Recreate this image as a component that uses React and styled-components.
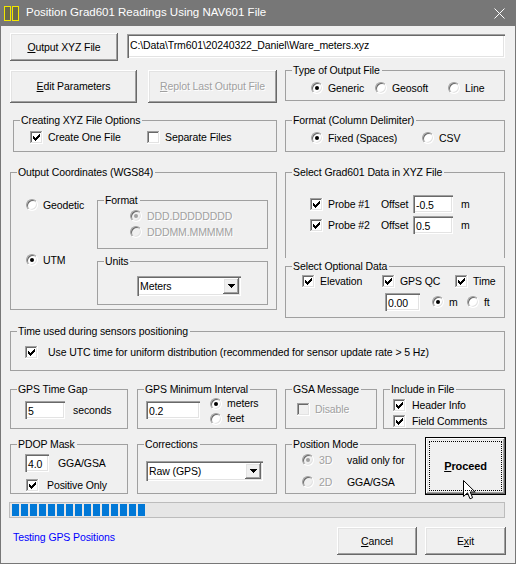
import React from 'react';
import styled, { createGlobalStyle } from 'styled-components';

const GlobalStyle = createGlobalStyle`
  html, body {
    margin: 0;
    padding: 0;
    background: #ffffff;
  }
`;

// classic 3D edges
const raised = `
  box-shadow: inset -1px -1px 0 #696969, inset 1px 1px 0 #ffffff,
    inset -2px -2px 0 #a0a0a0, inset 2px 2px 0 #e3e3e3;
`;
const sunken = `
  box-shadow: inset 1px 1px 0 #a0a0a0, inset 2px 2px 0 #696969,
    inset -1px -1px 0 #ffffff, inset -2px -2px 0 #e3e3e3;
`;

const Window = styled.div`
  width: 516px;
  height: 564px;
  box-sizing: border-box;
  display: flex;
  flex-direction: column;
  background: #f0f0f0;
  border: 1px solid #777777;
  border-top: none;
  font-family: 'Liberation Sans', Arial, sans-serif;
  font-size: 10.5px;
  letter-spacing: -0.1px;
  line-height: 13px;
  color: #000;
  overflow: hidden;
`;

const TitleBar = styled.div`
  height: 26px;
  flex: none;
  display: flex;
  align-items: center;
  padding-left: 3px;
  background: #777777;
  color: #ffffff;
  font-size: 11.5px;
  letter-spacing: 0;
`;

const TitleText = styled.span`
  margin-left: 6px;
  margin-top: -1px;
`;

const CloseGlyph = styled.svg`
  margin-left: auto;
  margin-right: 10px;
`;

const Client = styled.div`
  display: flex;
  flex-direction: column;
  padding: 7px 10px 0 9px;
`;

const TopRow = styled.div`
  display: flex;
  align-items: flex-start;
  gap: 9px;
  height: 28px;
`;

const PushButton = styled.button`
  position: relative;
  flex: none;
  width: ${p => p.$w}px;
  height: ${p => p.$h}px;
  margin: 0;
  padding: 0;
  border: none;
  background: #f0f0f0;
  font: inherit;
  letter-spacing: inherit;
  color: #000;
  ${raised}

  &:disabled {
    color: #a0a0a0;
    text-shadow: 1px 1px 0 #ffffff;
  }
`;

const DefaultButton = styled(PushButton)`
  border: 1px solid #000;
  font-weight: bold;
  font-size: 11px;

  &::after {
    content: '';
    position: absolute;
    inset: 3px;
    border: 1px dotted #000;
  }
`;

const Field = styled.div`
  flex: none;
  box-sizing: border-box;
  width: ${p => p.$w}px;
  height: ${p => p.$h || 18}px;
  margin-top: ${p => p.$top || 0}px;
  padding: ${p => p.$pt ?? 4}px 0 0 3px;
  background: #ffffff;
  white-space: nowrap;
  overflow: hidden;
  ${sunken}
`;

const Columns = styled.div`
  display: grid;
  grid-template-columns: 267px 220px;
  column-gap: 8px;
  align-items: start;
  margin-top: 3px;
`;

const Column = styled.div`
  display: flex;
  flex-direction: column;
`;

const ButtonPair = styled.div`
  display: flex;
  gap: 11px;
  margin-top: 6px;
`;

const Group = styled.fieldset`
  box-sizing: border-box;
  flex: none;
  width: ${p => p.$w}px;
  height: ${p => p.$h}px;
  min-width: 0;
  margin: ${p => p.$mt || 0}px 0 0 ${p => p.$ml || 0}px;
  padding: 0;
  border: 1px solid #a0a0a0;
  border-bottom-style: ${p => (p.$open ? 'none' : 'solid')};
`;

const Legend = styled.legend`
  margin-left: 6px;
  padding: 0 2px 0 1px;
  height: 13px;
  line-height: 13px;
`;

const OptionRow = styled.div`
  display: flex;
  align-items: center;
  gap: ${p => p.$gap || 0}px;
  height: ${p => p.$h || 14}px;
  padding-left: ${p => p.$indent || 0}px;
  margin-top: ${p => p.$top || 0}px;
`;

const Stack = styled.div`
  display: flex;
  flex-direction: column;
  padding: ${p => p.$pt || 0}px 0 0 ${p => p.$pl || 0}px;
  margin-left: ${p => p.$ml || 0}px;
  gap: ${p => p.$gap || 0}px;
`;

const Inline = styled.div`
  display: flex;
  align-items: flex-start;
  padding-left: ${p => p.$pl || 0}px;
`;

const CoordGrid = styled.div`
  display: grid;
  grid-template-columns: 71px 171px;
  row-gap: 6px;
  margin-top: 15px;
  padding-left: 15px;
`;

const CoordCell = styled.div`
  padding-top: ${p => p.$pt || 0}px;
  margin-top: ${p => p.$mt || 0}px;
`;

const Text = styled.span`
  flex: none;
  white-space: nowrap;
  width: ${p => (p.$w ? `${p.$w}px` : 'auto')};
  margin-left: ${p => p.$ml || 0}px;
`;

const ChoiceLabel = styled.label`
  display: inline-flex;
  align-items: center;
  flex: none;
  gap: ${p => p.$gap ?? 5}px;
  width: ${p => (p.$w ? `${p.$w}px` : 'auto')};
  white-space: nowrap;
  color: ${p => (p.$disabled ? '#a0a0a0' : 'inherit')};
  text-shadow: ${p => (p.$disabled ? '1px 1px 0 #ffffff' : 'none')};
`;

const RadioMark = styled.span`
  flex: none;
  display: grid;
  place-items: center;
  width: 12px;
  height: 12px;
  box-sizing: border-box;
  border-radius: 50%;
  border: 1px solid;
  border-color: #a0a0a0 #ffffff #ffffff #a0a0a0;
  background: ${p => (p.$disabled ? '#f0f0f0' : '#ffffff')};
  box-shadow: inset 1px 1px 0 #696969, inset -1px -1px 0 #e3e3e3;

  &::after {
    content: '';
    display: ${p => (p.$checked ? 'block' : 'none')};
    width: 4px;
    height: 4px;
    border-radius: 50%;
    background: ${p => (p.$disabled ? '#a0a0a0' : '#000')};
  }
`;

const Radio = ({ label, checked, disabled, w, gap }) => (
  <ChoiceLabel $w={w} $gap={gap} $disabled={disabled}>
    <RadioMark $checked={checked} $disabled={disabled} />
    {label}
  </ChoiceLabel>
);

const TICK = [
  [9, 3, 1], [8, 4, 2], [3, 5, 1], [7, 5, 3], [3, 6, 2],
  [6, 6, 3], [3, 7, 5], [4, 8, 3], [5, 9, 1],
];

const CheckMark = ({ checked, disabled }) => (
  <svg width="13" height="13" viewBox="0 0 13 13" shapeRendering="crispEdges" style={{ flex: 'none' }}>
    <rect x="0" y="0" width="13" height="13" fill="#ffffff" />
    <rect x="0" y="0" width="12" height="12" fill="#a0a0a0" />
    <rect x="1" y="1" width="11" height="11" fill="#e3e3e3" />
    <rect x="1" y="1" width="10" height="10" fill="#696969" />
    <rect x="2" y="2" width="9" height="9" fill={disabled ? '#f0f0f0' : '#ffffff'} />
    {checked && TICK.map(([x, y, w]) => (
      <rect key={`${x}-${y}`} x={x} y={y} width={w} height="1" fill="#000" />
    ))}
  </svg>
);

const Check = ({ label, checked, disabled, w, gap }) => (
  <ChoiceLabel $w={w} $gap={gap} $disabled={disabled}>
    <CheckMark checked={checked} disabled={disabled} />
    {label}
  </ChoiceLabel>
);

const ComboBox = styled.div`
  flex: none;
  box-sizing: border-box;
  display: flex;
  align-items: center;
  width: ${p => p.$w}px;
  height: 20px;
  margin-top: ${p => p.$top || 0}px;
  padding: 2px;
  background: #ffffff;
  ${sunken}
`;

const ComboText = styled.span`
  flex: 1;
  padding-left: 1px;
  padding-top: 1px;
  white-space: nowrap;
`;

const ComboButton = styled.span`
  flex: none;
  display: grid;
  place-items: center;
  width: 16px;
  height: 16px;
  background: #f0f0f0;
  ${raised}
`;

const Combo = ({ value, w, top }) => (
  <ComboBox $w={w} $top={top}>
    <ComboText>{value}</ComboText>
    <ComboButton>
      <svg width="7" height="4" viewBox="0 0 7 4" shapeRendering="crispEdges">
        <path d="M0 0H7L3.5 4Z" fill="#000" />
      </svg>
    </ComboButton>
  </ComboBox>
);

const Section = styled(Group)``;

const BottomRow = styled.div`
  display: flex;
  align-items: flex-start;
  margin-top: ${p => p.$top}px;
  height: ${p => p.$h}px;
`;

const Progress = styled.div`
  box-sizing: border-box;
  display: flex;
  gap: 2px;
  width: 496px;
  height: 16px;
  margin: 7px 0 0 -1px;
  padding: 1px 2px;
  border: 1px solid #bcbcbc;
  background: #e6e6e6;
`;

const ProgressBlock = styled.span`
  width: 7px;
  height: 12px;
  background: #0078d7;
`;

const Footer = styled.div`
  display: flex;
  align-items: flex-start;
  margin-top: 9px;
`;

const StatusText = styled.span`
  margin: 4px 0 0 3px;
  color: #0000ff;
`;

const FooterButtons = styled.div`
  display: flex;
  gap: 8px;
  margin-left: auto;
  margin-right: -1px;
`;

const Pointer = styled.svg`
  position: absolute;
  left: 37px;
  top: 42px;
  pointer-events: none;
`;

const outputPath = String.raw`C:\Data\Trm601\20240322_Daniel\Ware_meters.xyz`;

export default function App() {
  return (
    <>
      <GlobalStyle />
      <Window>
        <TitleBar>
          <svg width="16" height="16" viewBox="0 0 16 16" shapeRendering="crispEdges" style={{ marginTop: 2 }}>
            <rect x="0.5" y="0.5" width="6" height="14" fill="#6a6a4a" stroke="#f2e600" />
            <rect x="8.5" y="0.5" width="6" height="14" fill="#6a6a4a" stroke="#f2e600" />
          </svg>
          <TitleText>Position Grad601 Readings Using NAV601 File</TitleText>
          <CloseGlyph width="11" height="11" viewBox="0 0 11 11">
            <path d="M0.5 0.5L10.5 10.5M10.5 0.5L0.5 10.5" stroke="#ffffff" strokeWidth="1" />
          </CloseGlyph>
        </TitleBar>

        <Client>
          <TopRow>
            <PushButton $w={108} $h={28}><u>O</u>utput XYZ File</PushButton>
            <Field $w={378} $h={24} $top={1} $pt={5}>{outputPath}</Field>
          </TopRow>

          <Columns>
            <Column>
              <ButtonPair>
                <PushButton $w={127} $h={33}><u>E</u>dit Parameters</PushButton>
                <PushButton $w={129} $h={33} disabled><u>R</u>eplot Last Output File</PushButton>
              </ButtonPair>

              <Group $w={264} $h={38} $mt={11} $ml={3}>
                <Legend>Creating XYZ File Options</Legend>
                <OptionRow $indent={16} $top={3}>
                  <Check checked label="Create One File" w={117} />
                  <Check label="Separate Files" />
                </OptionRow>
              </Group>

              <Group $w={267} $h={144} $mt={14}>
                <Legend>Output Coordinates (WGS84)</Legend>
                <CoordGrid>
                  <CoordCell $pt={4}>
                    <OptionRow><Radio label="Geodetic" /></OptionRow>
                  </CoordCell>
                  <Group $w={171} $h={55}>
                    <Legend>Format</Legend>
                    <Stack $pt={1} $pl={32}>
                      <OptionRow $h={16}><Radio checked disabled label="DDD.DDDDDDDD" /></OptionRow>
                      <OptionRow $h={16}><Radio disabled label="DDDMM.MMMMM" /></OptionRow>
                    </Stack>
                  </Group>
                  <CoordCell $mt={-2}>
                    <OptionRow><Radio checked label="UTM" /></OptionRow>
                  </CoordCell>
                  <Group $w={171} $h={50}>
                    <Legend>Units</Legend>
                    <Inline $pl={39}>
                      <Combo value="Meters" w={104} top={8} />
                    </Inline>
                  </Group>
                </CoordGrid>
              </Group>
            </Column>

            <Column>
              <Group $w={220} $h={37}>
                <Legend>Type of Output File</Legend>
                <OptionRow $indent={25} $top={4}>
                  <Radio checked label="Generic" w={64} />
                  <Radio label="Geosoft" w={73} />
                  <Radio label="Line" />
                </OptionRow>
              </Group>

              <Group $w={220} $h={38} $mt={13}>
                <Legend>Format (Column Delimiter)</Legend>
                <OptionRow $indent={25} $top={4}>
                  <Radio checked label="Fixed (Spaces)" w={111} />
                  <Radio label="CSV" />
                </OptionRow>
              </Group>

              <Group $w={220} $h={92} $mt={14} $open>
                <Legend>Select Grad601 Data in XYZ File</Legend>
                <Stack $pt={15} $pl={24} $gap={1}>
                  <OptionRow $h={20}>
                    <Check checked label="Probe #1" w={71} />
                    <Text $w={32}>Offset</Text>
                    <Field $w={40}>-0.5</Field>
                    <Text $ml={8}>m</Text>
                  </OptionRow>
                  <OptionRow $h={20}>
                    <Check checked label="Probe #2" w={71} />
                    <Text $w={32}>Offset</Text>
                    <Field $w={40}>0.5</Field>
                    <Text $ml={8}>m</Text>
                  </OptionRow>
                </Stack>
              </Group>

              <Group $w={220} $h={58} $mt={2}>
                <Legend>Select Optional Data</Legend>
                <OptionRow $indent={16} $top={1}>
                  <Check checked label="Elevation" w={80} />
                  <Check checked label="GPS QC" w={73} />
                  <Check checked label="Time" />
                </OptionRow>
                <OptionRow $indent={99} $top={5} $h={18}>
                  <Field $w={35}>0.00</Field>
                  <Text $ml={12} />
                  <Radio checked label="m" w={35} />
                  <Radio label="ft" />
                </OptionRow>
              </Group>
            </Column>
          </Columns>

          <Group $w={495} $h={46} $mt={7}>
            <Legend>Time used during sensors positioning</Legend>
            <OptionRow $indent={14} $top={7}>
              <Check checked gap={10} label="Use UTC time for uniform distribution (recommended for sensor update rate > 5 Hz)" />
            </OptionRow>
          </Group>

          <BottomRow $top={12} $h={46}>
            <Section $w={118} $h={46}>
              <Legend>GPS Time Gap</Legend>
              <OptionRow $indent={14} $top={5} $h={18}>
                <Field $w={40}>5</Field>
                <Text $ml={8}>seconds</Text>
              </OptionRow>
            </Section>

            <Section $w={140} $h={46} $ml={9}>
              <Legend>GPS Minimum Interval</Legend>
              <Inline $pl={8}>
                <Field $w={54} $top={5}>0.2</Field>
                <Stack $ml={10}>
                  <OptionRow $h={15}><Radio checked label="meters" /></OptionRow>
                  <OptionRow $h={15}><Radio label="feet" /></OptionRow>
                </Stack>
              </Inline>
            </Section>

            <Section $w={92} $h={46} $ml={8}>
              <Legend>GSA Message</Legend>
              <OptionRow $indent={11} $top={6}>
                <Check disabled label="Disable" />
              </OptionRow>
            </Section>

            <Section $w={122} $h={46} $ml={6}>
              <Legend>Include in File</Legend>
              <Stack $pt={1} $pl={9}>
                <OptionRow $h={16}><Check checked gap={6} label="Header Info" /></OptionRow>
                <OptionRow $h={16}><Check checked gap={6} label="Field Comments" /></OptionRow>
              </Stack>
            </Section>
          </BottomRow>

          <BottomRow $top={8} $h={58}>
            <Section $w={118} $h={56} $mt={1}>
              <Legend>PDOP Mask</Legend>
              <OptionRow $indent={14} $top={3} $h={18}>
                <Field $w={24}>4.0</Field>
                <Text $ml={9}>GGA/GSA</Text>
              </OptionRow>
              <OptionRow $indent={15} $top={6}>
                <Check checked gap={8} label="Positive Only" />
              </OptionRow>
            </Section>

            <Section $w={140} $h={56} $mt={1} $ml={9}>
              <Legend>Corrections</Legend>
              <Inline $pl={8}>
                <Combo value="Raw (GPS)" w={117} top={10} />
              </Inline>
            </Section>

            <Section $w={131} $h={56} $mt={1} $ml={8}>
              <Legend>Position Mode</Legend>
              <OptionRow $indent={16} $top={2}>
                <Radio checked disabled label="3D" w={45} />
                <Text>valid only for</Text>
              </OptionRow>
              <OptionRow $indent={16} $top={8}>
                <Radio disabled label="2D" w={45} />
                <Text>GGA/GSA</Text>
              </OptionRow>
            </Section>

            <DefaultButton $w={81} $h={58} style={{ marginLeft: 9 }}>
              <u>P</u>roceed
              <Pointer width="13" height="21" viewBox="0 0 13 21">
                <path
                  d="M0.5 0.5V16.5L4.5 12.8L7 18.8L9.6 17.7L7.2 12H12.2Z"
                  fill="#ffffff"
                  stroke="#000"
                  strokeWidth="1"
                  strokeLinejoin="miter"
                />
              </Pointer>
            </DefaultButton>
          </BottomRow>

          <Progress>
            {Array.from({ length: 15 }, (_, i) => (
              <ProgressBlock key={i} />
            ))}
          </Progress>

          <Footer>
            <StatusText>Testing GPS Positions</StatusText>
            <FooterButtons>
              <PushButton $w={80} $h={28}><u>C</u>ancel</PushButton>
              <PushButton $w={81} $h={28}>E<u>x</u>it</PushButton>
            </FooterButtons>
          </Footer>
        </Client>
      </Window>
    </>
  );
}
